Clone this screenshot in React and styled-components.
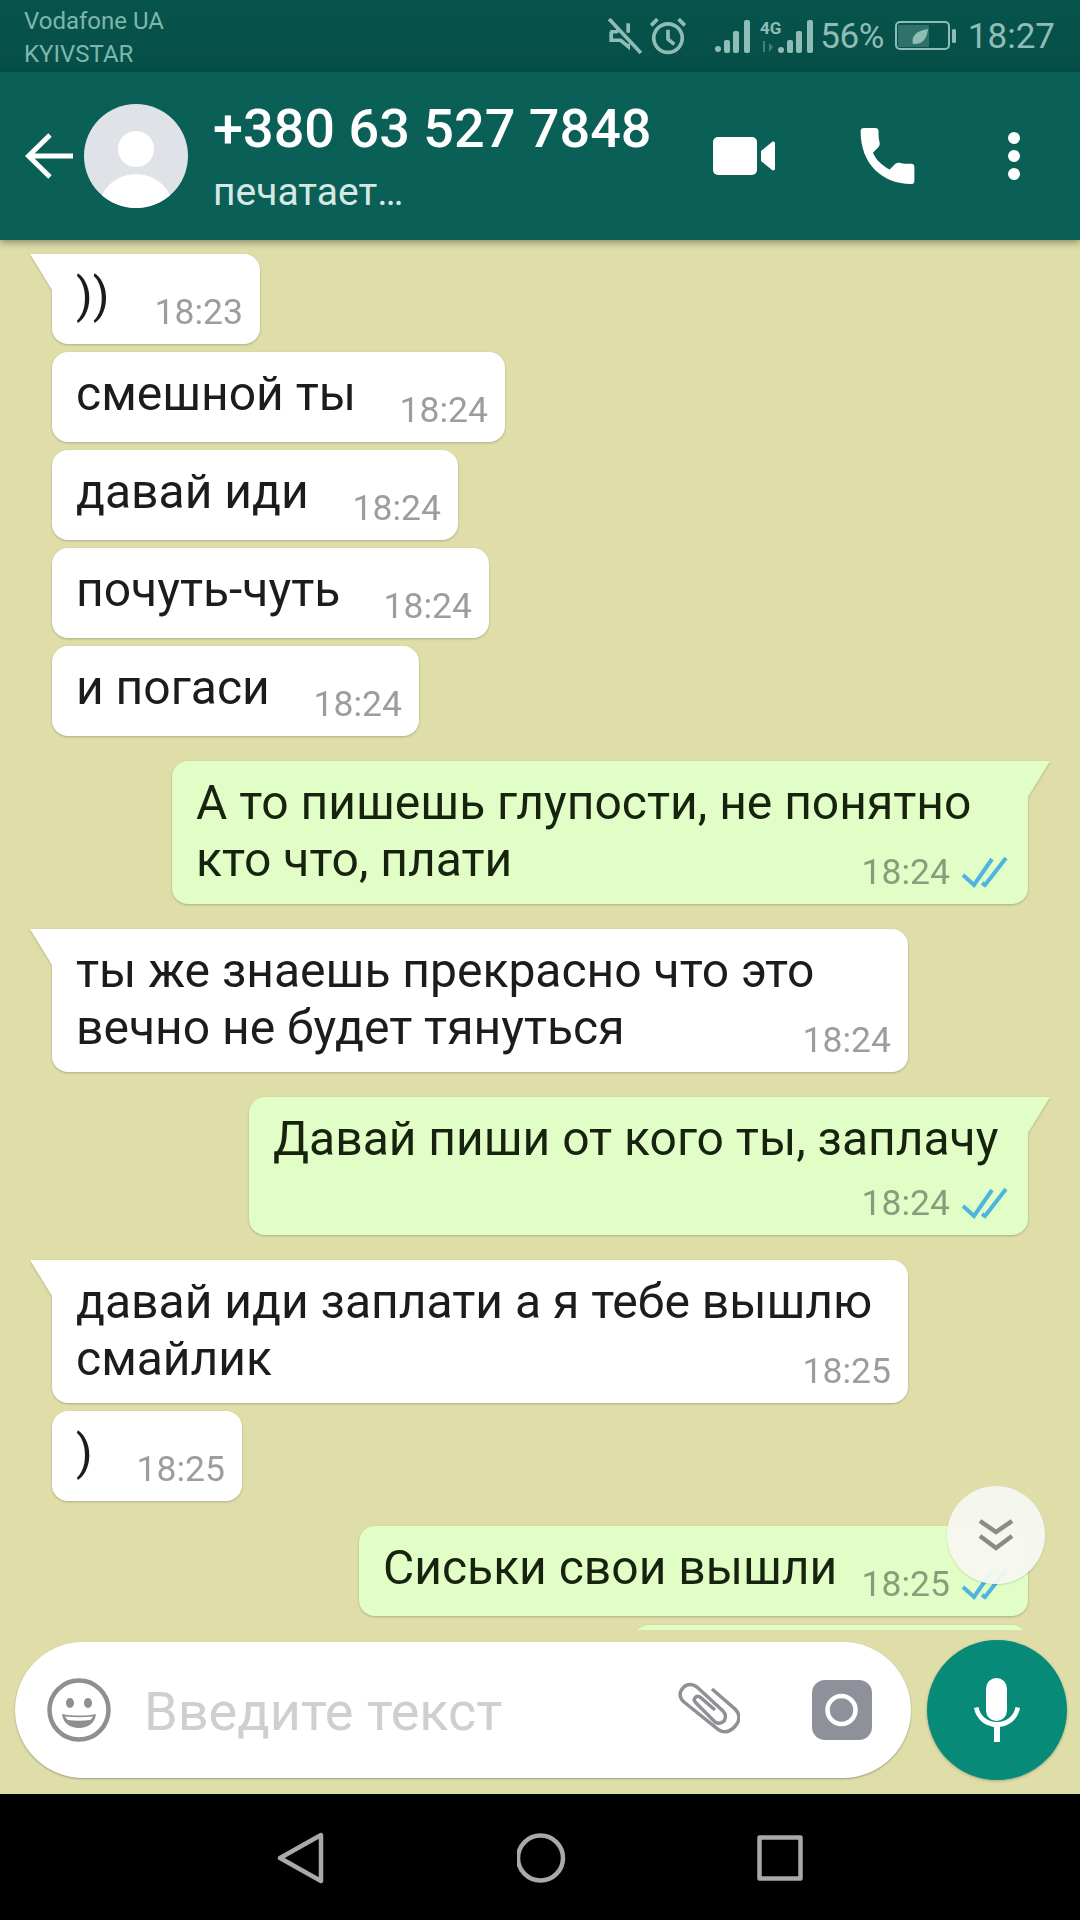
import React from 'react'
import styled, { createGlobalStyle } from 'styled-components'

const GlobalStyle = createGlobalStyle`
  html, body { margin: 0; padding: 0; background: #000; }
  * { box-sizing: border-box; }
`

const Screen = styled.div`
  width: 1080px;
  height: 1920px;
  display: flex;
  flex-direction: column;
  overflow: hidden;
  font-family: Roboto, "Noto Sans", sans-serif;
`

const StatusBar = styled.div`
  height: 72px;
  flex: none;
  display: flex;
  align-items: center;
  justify-content: space-between;
  padding: 0 25px 0 24px;
  background: linear-gradient(#06544c, #064f48);
  color: #8fbdb5;
`

const Carriers = styled.div`
  font-size: 24px;
  line-height: 33px;
  color: #7fb6ac;
  padding-top: 3px;
`

const StatusIcons = styled.div`
  display: flex;
  align-items: center;
`

const StatusIcon = styled.svg`
  display: block;
  flex: none;
  margin-left: ${(p) => p.$gap || 0}px;
`

const BatteryText = styled.span`
  font-size: 35px;
  margin-left: 6px;
  margin-right: 11px;
  letter-spacing: -0.5px;
`

const ClockText = styled.span`
  font-size: 35px;
  margin-left: 12px;
`

const Header = styled.header`
  height: 168px;
  flex: none;
  display: flex;
  align-items: center;
  padding: 0 0 0 25px;
  background: #0a5f56;
  color: #fff;
  position: relative;
  z-index: 2;
  box-shadow: 0 3px 7px rgba(0, 0, 0, 0.35);
`

const Avatar = styled.svg`
  display: block;
  margin-left: 11px;
  flex: none;
`

const Contact = styled.div`
  margin-left: 25px;
  width: 447px;
`

const ContactName = styled.div`
  font-size: 54px;
  font-weight: 500;
  line-height: 62px;
  white-space: nowrap;
`

const ContactStatus = styled.div`
  font-size: 39px;
  line-height: 46px;
  margin-top: 9px;
  color: #d6e8e4;
  white-space: nowrap;
`

const HeaderActions = styled.div`
  display: flex;
  align-items: center;
  margin-left: 53px;
`

const HeaderIcon = styled.svg`
  display: block;
  flex: none;
  margin-left: ${(p) => p.$gap || 0}px;
`

const Chat = styled.main`
  flex: 1;
  min-height: 0;
  display: flex;
  flex-direction: column;
  background: #dfdea9;
  position: relative;
`

const Messages = styled.div`
  flex: 1;
  min-height: 0;
  overflow: hidden;
  display: flex;
  flex-direction: column;
  padding: 14px 52px 0 52px;
`

const Bubble = styled.div`
  flex: none;
  position: relative;
  display: grid;
  width: ${(p) => p.$width}px;
  height: ${(p) => p.$height || 90}px;
  margin-top: ${(p) => p.$gap}px;
  padding: 13px 17px 12px 24px;
  align-self: ${(p) => (p.$out ? 'flex-end' : 'flex-start')};
  background: ${(p) => (p.$out ? '#e1fec6' : '#ffffff')};
  color: ${(p) => (p.$out ? '#17230f' : '#1c1c1c')};
  border-radius: 16px;
  filter: drop-shadow(0 1px 1px rgba(0, 0, 0, 0.22));
  ${(p) => p.$tail && (p.$out ? 'border-top-right-radius: 0;' : 'border-top-left-radius: 0;')}

  ${(p) => p.$tail && `
    &::before {
      content: '';
      position: absolute;
      top: 0;
      ${p.$out ? 'right: -22px;' : 'left: -22px;'}
      width: 22px;
      height: 36px;
      background: inherit;
      clip-path: ${p.$out ? 'polygon(0 0, 100% 0, 0 100%)' : 'polygon(0 0, 100% 0, 100% 100%)'};
    }
  `}
`

const BubbleText = styled.div`
  grid-area: 1 / 1;
  justify-self: start;
  align-self: start;
  font-size: 48px;
  line-height: 57px;
`

const TextLine = styled.div`
  width: fit-content;
  white-space: nowrap;
`

const Meta = styled.div`
  grid-area: 1 / 1;
  justify-self: end;
  align-self: end;
  display: flex;
  align-items: center;
  height: 40px;
  font-size: 35.5px;
  color: ${(p) => (p.$out ? '#8a9c7c' : '#9d9d9d')};
`

const Ticks = styled.svg`
  display: block;
  margin-left: 12px;
  margin-right: 3px;
`

const ScrollButton = styled.div`
  position: absolute;
  top: 1246px;
  right: 35px;
  width: 98px;
  height: 98px;
  border-radius: 50%;
  display: flex;
  align-items: center;
  justify-content: center;
  background: rgba(247, 248, 242, 0.94);
  box-shadow: 0 1px 2px rgba(0, 0, 0, 0.15);
`

const Composer = styled.div`
  flex: none;
  display: flex;
  align-items: center;
  gap: 16px;
  padding: 10px 13px 14px 15px;
`

const InputPill = styled.div`
  width: 896px;
  height: 136px;
  display: flex;
  align-items: center;
  padding: 0 39px 0 32px;
  background: #fff;
  border-radius: 68px;
  box-shadow: 0 1px 2px rgba(0, 0, 0, 0.3);
`

const Placeholder = styled.div`
  flex: 1;
  margin-left: 33px;
  padding-top: 3px;
  font-size: 54px;
  color: #cfcfcf;
  white-space: nowrap;
`

const PillIcon = styled.svg`
  display: block;
  flex: none;
  margin-left: ${(p) => p.$gap || 0}px;
`

const MicButton = styled.div`
  width: 140px;
  height: 140px;
  flex: none;
  border-radius: 50%;
  display: flex;
  align-items: center;
  justify-content: center;
  background: #078a78;
  box-shadow: 0 1px 3px rgba(0, 0, 0, 0.25);
`

const NavBar = styled.nav`
  height: 126px;
  flex: none;
  display: flex;
  align-items: center;
  justify-content: center;
  gap: 190px;
  background: #000;
  padding-top: 1px;
`

function DoubleTick() {
  return (
    <Ticks width="46" height="32" viewBox="0 0 46 32" fill="none" stroke="#4db5e0" strokeWidth="4">
      <path d="M1 19l11 10L30 3" />
      <path d="M20 27l3 2L44 2" />
    </Ticks>
  )
}

const messages = [
  { lines: ['))'], time: '18:23', width: 208, gap: 0, tail: true },
  { lines: ['смешной ты'], time: '18:24', width: 453, gap: 8 },
  { lines: ['давай иди'], time: '18:24', width: 406, gap: 8 },
  { lines: ['почуть-чуть'], time: '18:24', width: 437, gap: 8 },
  { lines: ['и погаси'], time: '18:24', width: 367, gap: 8 },
  { lines: ['А то пишешь глупости, не понятно', 'кто что, плати'], time: '18:24', width: 856, height: 143, gap: 25, tail: true, out: true },
  { lines: ['ты же знаешь прекрасно что это', 'вечно не будет тянуться'], time: '18:24', width: 856, height: 143, gap: 25, tail: true },
  { lines: ['Давай пиши от кого ты, заплачу'], time: '18:24', width: 779, height: 138, gap: 25, tail: true, out: true },
  { lines: ['давай иди заплати а я тебе вышлю', 'смайлик'], time: '18:25', width: 856, height: 143, gap: 25, tail: true },
  { lines: [')'], time: '18:25', width: 190, gap: 8 },
  { lines: ['Сиськи свои вышли'], time: '18:25', width: 669, gap: 25, out: true },
  { lines: [], time: '', width: 395, gap: 9, out: true },
]

function App() {
  return (
    <Screen>
      <GlobalStyle />
      <StatusBar>
        <Carriers>
          Vodafone UA
          <br />
          KYIVSTAR
        </Carriers>
        <StatusIcons>
          <StatusIcon width="34" height="36" viewBox="0 0 32 34" fill="none" stroke="currentColor" strokeWidth="3.500">
            <path d="M2 13h6l2-2M19 5v9M19 24v3l-7-6H3v-8" />
            <path d="M1 1l30 32" />
          </StatusIcon>
          <StatusIcon $gap={8} width="36" height="38" viewBox="0 0 34 36" fill="none" stroke="currentColor" strokeWidth="3.500">
            <circle cx="17" cy="20" r="13.500" />
            <path d="M17 12v9l6 5M1 8l6-6M33 8l-6-6" />
          </StatusIcon>
          <StatusIcon $gap={29} width="36" height="34" viewBox="0 0 36 34" fill="currentColor">
            <circle cx="3" cy="30" r="3" />
            <rect x="9" y="21" width="6" height="13" rx="2" />
            <rect x="18" y="12" width="6" height="22" rx="2" />
            <rect x="29" y="1" width="6" height="33" rx="2" />
          </StatusIcon>
          <StatusIcon $gap={9} width="54" height="34" viewBox="0 0 54 34" fill="currentColor">
            <text x="0" y="15" fontSize="17" fontWeight="700" fontFamily="Roboto, sans-serif">4G</text>
            <path d="M3 22h2v11H3zM9 24l4 4-4 5z" opacity="0.45" />
            <circle cx="21" cy="31" r="3" />
            <rect x="27" y="21" width="6" height="13" rx="2" />
            <rect x="36" y="12" width="6" height="22" rx="2" />
            <rect x="47" y="1" width="6" height="33" rx="2" />
          </StatusIcon>
          <BatteryText>56%</BatteryText>
          <StatusIcon width="61" height="30" viewBox="0 0 61 30" fill="none">
            <rect x="1" y="1" width="53" height="27" rx="4" stroke="currentColor" strokeWidth="2" />
            <rect x="3" y="4" width="31" height="22" fill="currentColor" opacity="0.3" />
            <rect x="57" y="8" width="4" height="14" rx="1.500" fill="currentColor" />
            <path d="M18 23c-2-7 2-13 15-15-1 10-6 16-15 15z" fill="currentColor" />
          </StatusIcon>
          <ClockText>18:27</ClockText>
        </StatusIcons>
      </StatusBar>

      <Header>
        <svg width="48" height="48" viewBox="0 0 48 48" fill="none" stroke="#fff" strokeWidth="5">
          <path d="M48 24H4M25 3L3.500 24 25 45" />
        </svg>
        <Avatar width="104" height="108" viewBox="0 0 104 108">
          <defs>
            <clipPath id="avatarClip">
              <circle cx="52" cy="54" r="52" />
            </clipPath>
          </defs>
          <circle cx="52" cy="54" r="52" fill="#dfe3e7" />
          <circle cx="52" cy="47" r="18" fill="#fff" />
          <ellipse cx="52" cy="107" rx="37" ry="35" fill="#fff" clipPath="url(#avatarClip)" />
        </Avatar>
        <Contact>
          <ContactName>+380 63 527 7848</ContactName>
          <ContactStatus>печатает…</ContactStatus>
        </Contact>
        <HeaderActions>
          <HeaderIcon width="62" height="38" viewBox="0 0 62 38" fill="#fff">
            <rect x="0" y="0" width="44" height="38" rx="5" />
            <path d="M48 14l11-9c1-1 3 0 3 1v26c0 1-2 2-3 1L48 24z" />
          </HeaderIcon>
          <HeaderIcon $gap={85} width="55" height="56" viewBox="1 0 48 50" fill="#fff">
            <path d="M1 3c0-2 1-3 3-3h10c2 0 3 1 3 3 0 4 0 7 1 10 0 2 0 3-1 4l-5 5c3 7 9 12 15 15l5-5c1-1 2-1 4-1 3 1 6 1 10 1 2 0 3 1 3 3v12c0 2-1 3-3 3C21 50 1 33 1 3z" />
          </HeaderIcon>
          <HeaderIcon $gap={93} width="12" height="48" viewBox="0 0 12 48" fill="#fff">
            <circle cx="6" cy="6" r="6" />
            <circle cx="6" cy="24" r="6" />
            <circle cx="6" cy="42" r="6" />
          </HeaderIcon>
        </HeaderActions>
      </Header>

      <Chat>
        <Messages>
          {messages.map((m, i) => (
            <Bubble key={i} $width={m.width} $height={m.height} $gap={m.gap} $tail={m.tail} $out={m.out}>
              <BubbleText>
                {m.lines.map((line) => (
                  <TextLine key={line}>{line}</TextLine>
                ))}
              </BubbleText>
              {m.time && (
                <Meta $out={m.out}>
                  {m.time}
                  {m.out && <DoubleTick />}
                </Meta>
              )}
            </Bubble>
          ))}
        </Messages>

        <ScrollButton>
          <svg width="36" height="32" viewBox="0 0 36 32" fill="none" stroke="#8b8b87" strokeWidth="4.500">
            <path d="M2 2l16 11L34 2M2 17l16 12 16-12" />
          </svg>
        </ScrollButton>

        <Composer>
          <InputPill>
            <PillIcon width="64" height="64" viewBox="0 0 64 64">
              <circle cx="32" cy="32" r="29.500" fill="none" stroke="#8e8f91" strokeWidth="4.500" />
              <ellipse cx="23" cy="25" rx="4" ry="5" fill="#8e8f91" />
              <ellipse cx="41" cy="25" rx="4" ry="5" fill="#8e8f91" />
              <path d="M15 36c10 2 24 2 34 0-1 9-8 14-17 14s-16-5-17-14z" fill="#8e8f91" />
              <path d="M18 38.500c9 1 19 1 28 0-1 1.500-2 3-3 3.500-7 1-15 1-22 0-1-.5-2-2-3-3.500z" fill="#fff" />
            </PillIcon>
            <Placeholder>Введите текст</Placeholder>
            <PillIcon width="62" height="58" viewBox="0 0 62 54" fill="none" stroke="#8e9094" strokeWidth="3.500">
              <path d="M34 6l23 20c5 5 5 11 1 16-4 6-11 9-17 5L6 19C1 15 1 9 5 5c4-5 10-4 14-1l26 24c3 3 3 7 1 10-3 3-6 3-9 1L18 20c-2-2-2-4-1-5 1-2 3-2 5-1l15 13" />
            </PillIcon>
            <PillIcon $gap={72} width="60" height="60" viewBox="0 0 60 60">
              <rect width="60" height="60" rx="13" fill="#8e9199" />
              <circle cx="29.500" cy="30" r="14" fill="none" stroke="#fff" strokeWidth="4.500" />
            </PillIcon>
          </InputPill>
          <MicButton>
            <svg width="46" height="64" viewBox="0 0 46 64" fill="#fff">
              <rect x="12" y="0" width="21" height="43" rx="10.500" />
              <path d="M23 49C11 49 2 41 0 30l4.500-1C6 38 14 44 23 44s17-6 18.500-15l4.500 1C44 41 35 49 23 49z" />
              <rect x="20" y="46" width="6" height="18" />
            </svg>
          </MicButton>
        </Composer>
      </Chat>

      <NavBar>
        <svg width="50" height="52" viewBox="0 0 50 52" fill="none" stroke="#a9a9a9" strokeWidth="4.500" strokeLinejoin="round">
          <path d="M3 26L44 3v46z" />
        </svg>
        <svg width="50" height="50" viewBox="0 0 50 50" fill="none" stroke="#a9a9a9" strokeWidth="4.500">
          <circle cx="23.500" cy="25" r="22.500" />
        </svg>
        <svg width="46" height="46" viewBox="0 0 46 46" fill="none" stroke="#a9a9a9" strokeWidth="4.500" strokeLinejoin="round">
          <rect x="2.500" y="2.500" width="41" height="41" />
        </svg>
      </NavBar>
    </Screen>
  )
}

export default App
